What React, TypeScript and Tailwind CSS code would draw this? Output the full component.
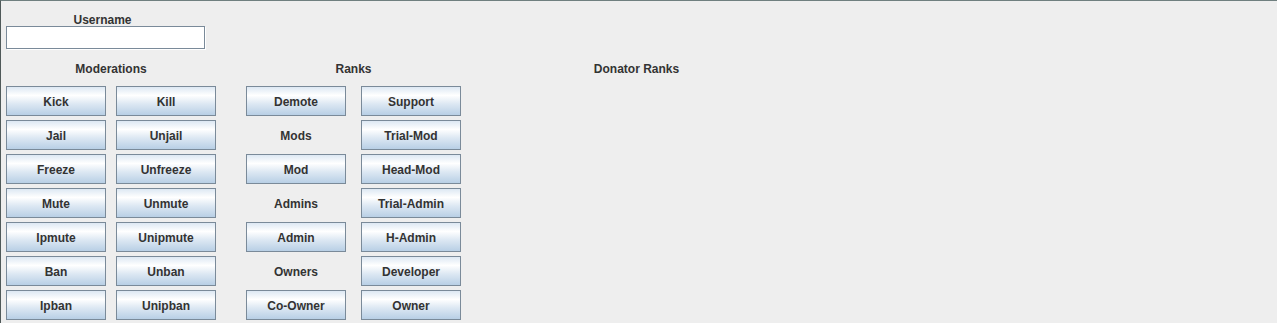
import React from 'react';

const moderations = [
  ['Kick', 'Kill'],
  ['Jail', 'Unjail'],
  ['Freeze', 'Unfreeze'],
  ['Mute', 'Unmute'],
  ['Ipmute', 'Unipmute'],
  ['Ban', 'Unban'],
  ['Ipban', 'Unipban'],
];

// leftIsLabel = plain text in the grid cell instead of a button
const ranks: { left: string; leftIsLabel?: boolean; right: string }[] = [
  { left: 'Demote', right: 'Support' },
  { left: 'Mods', leftIsLabel: true, right: 'Trial-Mod' },
  { left: 'Mod', right: 'Head-Mod' },
  { left: 'Admins', leftIsLabel: true, right: 'Trial-Admin' },
  { left: 'Admin', right: 'H-Admin' },
  { left: 'Owners', leftIsLabel: true, right: 'Developer' },
  { left: 'Co-Owner', right: 'Owner' },
];

function MetalButton({ label }: { label: string }) {
  return (
    <button className="w-[100px] h-[30px] pt-[2px] border border-[#7a8a99] bg-[linear-gradient(to_bottom,#dde8f3_0%,#ffffff_30%,#dde8f3_60%,#b8cfe5_100%)] text-[12px] font-bold text-[#333333] leading-none flex items-center justify-center">
      {label}
    </button>
  );
}

function Label({ text }: { text: string }) {
  return (
    <div className="w-[100px] h-[30px] pt-[2px] flex items-center justify-center text-[12px] font-bold text-[#333333]">
      {text}
    </div>
  );
}

export default function App() {
  return (
    <div
      className="w-[1277px] h-[323px] bg-[#eeeeee] border-t border-l border-t-[#6f7f7f] border-l-[#4f5959] overflow-hidden"
      style={{ fontFamily: '"Liberation Sans", Arial, sans-serif' }}
    >
      {/* Username */}
      <div className="pl-[5px] w-[205px]">
        <div className="mt-[12px] w-[193px] h-[13px] leading-[15px] text-center text-[12px] font-bold text-[#333333]">
          Username
        </div>
        <input className="block w-[199px] h-[23px] bg-white border border-[#7a8a99] shadow-[1px_1px_0_#ffffff] outline-none" />
      </div>

      <div className="flex pl-[5px] mt-[13px]">
        {/* Moderations */}
        <div className="w-[210px] flex flex-col">
          <div className="h-[14px] leading-[14px] text-center text-[12px] font-bold text-[#333333]">Moderations</div>
          <div className="mt-[10px] grid grid-cols-[100px_100px] gap-x-[10px] gap-y-[4px]">
            {moderations.map(([a, b]) => (
              <React.Fragment key={a}>
                <MetalButton label={a} />
                <MetalButton label={b} />
              </React.Fragment>
            ))}
          </div>
        </div>

        {/* Ranks */}
        <div className="ml-[30px] w-[215px] flex flex-col">
          <div className="h-[14px] leading-[14px] text-center text-[12px] font-bold text-[#333333]">Ranks</div>
          <div className="mt-[10px] grid grid-cols-[100px_100px] gap-x-[15px] gap-y-[4px]">
            {ranks.map((r) => (
              <React.Fragment key={r.left}>
                {r.leftIsLabel ? <Label text={r.left} /> : <MetalButton label={r.left} />}
                <MetalButton label={r.right} />
              </React.Fragment>
            ))}
          </div>
        </div>

        {/* Donator Ranks */}
        <div className="ml-[68px] w-[215px] flex flex-col">
          <div className="h-[14px] leading-[14px] text-center text-[12px] font-bold text-[#333333]">Donator Ranks</div>
        </div>
      </div>
    </div>
  );
}
